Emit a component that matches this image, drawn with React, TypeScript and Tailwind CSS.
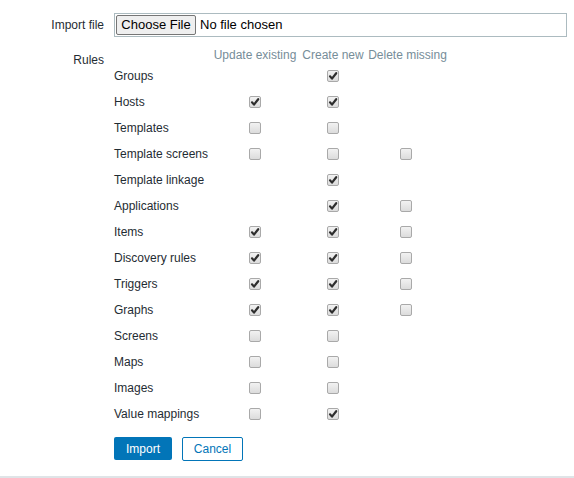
import React from "react";

type Cell = "on" | "off" | null;

const rows: [string, Cell, Cell, Cell][] = [
  ["Groups", null, "on", null],
  ["Hosts", "on", "on", null],
  ["Templates", "off", "off", null],
  ["Template screens", "off", "off", "off"],
  ["Template linkage", null, "on", null],
  ["Applications", null, "on", "off"],
  ["Items", "on", "on", "off"],
  ["Discovery rules", "on", "on", "off"],
  ["Triggers", "on", "on", "off"],
  ["Graphs", "on", "on", "off"],
  ["Screens", "off", "off", null],
  ["Maps", "off", "off", null],
  ["Images", "off", "off", null],
  ["Value mappings", "off", "on", null],
];

function Box({ checked }: { checked: boolean }) {
  return (
    <span className="relative inline-flex h-[12px] w-[12px] items-center justify-center rounded-[2px] border border-[#a9a9a9] bg-gradient-to-b from-[#f2f2f2] to-[#dcdcdc]">
      {checked && (
        <svg width="10" height="10" viewBox="0 0 10 10" className="absolute">
          <path d="M2 5.3 L4 7.6 L8.2 2.2" fill="none" stroke="#2e2e2e" strokeWidth="2.2" strokeLinecap="round" strokeLinejoin="round" />
        </svg>
      )}
    </span>
  );
}

function C({ v }: { v: Cell }) {
  return (
    <div className="flex h-[26px] items-center justify-center">
      {v !== null && <Box checked={v === "on"} />}
    </div>
  );
}

export default function App() {
  return (
    <div className="relative h-[478px] w-[574px] bg-white text-[12px] text-[#1f2c33]" style={{ fontFamily: '"Liberation Sans", Arial, sans-serif' }}>
      <div className="pt-[13px]">
        <div className="flex items-center">
          <div className="w-[104px] text-right">Import file</div>
          <div className="ml-[10px] flex h-[24px] w-[453px] items-center border border-[#acbbc0] pl-[1px]">
            <span className="flex h-[20px] w-[80px] items-center justify-center rounded-[2px] border border-[#767676] bg-[#efefef] text-[13px] text-black">
              Choose File
            </span>
            <span className="ml-[4px] text-[13px] text-black">No file chosen</span>
          </div>
        </div>
        <div className="mt-[10px] flex">
          <div className="w-[104px] pt-[4px] text-right">Rules</div>
          <div className="ml-[10px]">
            <div className="grid grid-cols-[97px_88px_68px_78px]">
              <div className="h-[16px]" />
              <div className="flex h-[16px] items-center justify-center whitespace-nowrap text-[#768d99]">Update existing</div>
              <div className="flex h-[16px] items-center justify-center whitespace-nowrap text-[#768d99]">Create new</div>
              <div className="flex h-[16px] items-center justify-center whitespace-nowrap pl-[3px] text-[#768d99]">Delete missing</div>
              {rows.map(([name, a, b, c]) => (
                <React.Fragment key={name}>
                  <div className="flex h-[26px] items-center whitespace-nowrap">{name}</div>
                  <C v={a} />
                  <C v={b} />
                  <C v={c} />
                </React.Fragment>
              ))}
            </div>
            <div className="mt-[10px] flex gap-[10px]">
              <button className="h-[23px] w-[58px] rounded-[2px] bg-[#0275b8] text-white">Import</button>
              <button className="h-[24px] w-[61px] rounded-[2px] border border-[#0275b8] bg-white text-[#0275b8]">Cancel</button>
            </div>
          </div>
        </div>
      </div>
      <div className="absolute bottom-0 left-0 h-[2px] w-full bg-[#dfe4e7]" />
    </div>
  );
}
